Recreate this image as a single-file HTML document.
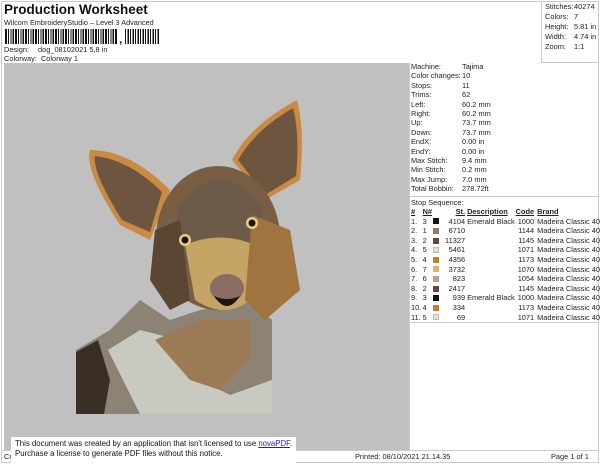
<!DOCTYPE html>
<html><head><style>
*{margin:0;padding:0;box-sizing:border-box}
body{width:600px;height:464px;background:#fff;font-family:"Liberation Sans",sans-serif;font-size:7.4px;color:#222;position:relative;overflow:hidden}
.a{position:absolute;white-space:nowrap}
.bx{position:absolute;border:1px solid #ccc}
td{padding:0}
</style></head><body>
<div class="bx" style="left:1px;top:1px;width:598px;height:462px"></div>
<div class="bx" style="left:541px;top:1px;width:58px;height:62px"></div>
<div class="a" style="left:4px;top:2px;font-size:13.5px;font-weight:bold;color:#111">Production Worksheet</div>
<div class="a" style="left:4px;top:18px;font-size:7.3px">Wilcom EmbroideryStudio – Level 3 Advanced</div>
<div class="a" style="left:5px;top:29px;width:113px;height:15px;background:repeating-linear-gradient(90deg,#111 0 2px,#fff 2px 3px,#111 3px 4px,#fff 4px 5.5px,#111 5.5px 6.5px,#fff 6.5px 7.5px,#111 7.5px 9px,#fff 9px 10px)"></div>
<div class="a" style="left:119px;top:33px;font-size:12px;font-weight:bold;line-height:12px">,</div>
<div class="a" style="left:125px;top:29px;width:35px;height:15px;background:repeating-linear-gradient(90deg,#111 0 1px,#fff 1px 2.5px,#111 2.5px 4px,#fff 4px 5px)"></div>
<div class="a" style="left:4px;top:45px">Design:</div><div class="a" style="left:38px;top:45px">dog_08102021 5,8 in</div>
<div class="a" style="left:4px;top:54px">Colorway:&nbsp; Colorway 1</div>
<div class="a" style="left:545px;top:2px;line-height:10px">Stitches:<br>Colors:<br>Height:<br>Width:<br>Zoom:</div>
<div class="a" style="left:574px;top:2px;line-height:10px">40274<br>7<br>5.81 in<br>4.74 in<br>1:1</div>
<div class="a" style="left:4px;top:63px;width:405px;height:387px;background:#c0c0c0"></div>
<svg class="a" style="left:4px;top:63px" width="405" height="387" viewBox="4 63 405 387">
<path d="M76 414 L76 350 L110 330 L140 300 L170 320 L200 310 L250 300 L272 320 L272 414 Z" fill="#8d8375"/>
<path d="M76 414 L76 352 L98 340 L110 380 L104 414Z" fill="#3a2f25"/>
<path d="M108 350 L140 330 L180 340 L200 380 L230 395 L272 380 L272 414 L140 414 Z" fill="#c9cabf"/>
<path d="M155 340 L200 320 L250 320 L250 360 L220 390 L190 380 Z" fill="#9c7a55"/>
<path d="M90 150 Q84 170 120 225 L150 240 L170 190 Q130 150 90 150Z" fill="#c98a42"/>
<path d="M95 156 Q92 172 122 220 L150 232 L162 192 Q130 160 95 156Z" fill="#6e5540"/>
<path d="M297 100 Q250 125 232 160 L265 200 L300 180 Q305 130 297 100Z" fill="#c98a42"/>
<path d="M293 108 Q255 130 238 160 L265 195 L296 176 Q300 135 293 108Z" fill="#6e5540"/>
<ellipse cx="218" cy="238" rx="62" ry="72" fill="#7a5e44"/>
<ellipse cx="220" cy="230" rx="45" ry="50" fill="#6d5b4a"/>
<path d="M185 245 Q220 230 255 245 L250 300 Q225 320 195 300Z" fill="#c6a466"/>
<path d="M252 215 L290 230 L300 290 L265 320 L245 300Z" fill="#a0743f"/>
<path d="M155 230 L180 220 L190 300 L170 310 L150 280Z" fill="#5a4632"/>
<ellipse cx="185" cy="240" rx="6" ry="6" fill="#e8d080"/><circle cx="185" cy="240" r="3.5" fill="#1b1510"/>
<ellipse cx="252" cy="223" rx="6" ry="6" fill="#e8d080"/><circle cx="252" cy="223" r="3.5" fill="#1b1510"/>
<ellipse cx="227" cy="288" rx="17" ry="14" fill="#8a6d62"/>
<path d="M214 296 Q227 316 240 296 Q227 302 214 296Z" fill="#1b1510"/>
</svg>
<div class="a" style="left:409px;top:63px;width:1px;height:387px;background:#ccc"></div>
<div class="a" style="left:411px;top:62px;line-height:9.4px">Machine:<br>Color changes:<br>Stops:<br>Trims:<br>Left:<br>Right:<br>Up:<br>Down:<br>EndX:<br>EndY:<br>Max Stitch:<br>Min Stitch:<br>Max Jump:<br>Total Bobbin:</div>
<div class="a" style="left:462px;top:62px;line-height:9.4px">Tajima<br>10<br>11<br>62<br>60.2 mm<br>60.2 mm<br>73.7 mm<br>73.7 mm<br>0.00 in<br>0.00 in<br>9.4 mm<br>0.2 mm<br>7.0 mm<br>278.72ft</div>
<div class="a" style="left:410px;top:196px;width:189px;height:1px;background:#ccc"></div>
<div class="a" style="left:411px;top:198px">Stop Sequence:</div>
<div class="a" style="left:411px;top:207px">
<table style="border-collapse:collapse;font-size:7.4px;line-height:9.6px">
<tr style="font-weight:bold;text-decoration:underline"><td style="width:13px">#</td><td style="width:12px">N#</td><td style="width:9px"></td><td style="width:29px;text-align:right">St.</td><td style="width:50px;padding-left:2px">Description</td><td style="width:20px;text-align:right">Code</td><td style="padding-left:3px">Brand</td></tr>
<tr><td>1.</td><td>3</td><td><div style="width:6px;height:6px;background:#111"></div></td><td style="text-align:right">4104</td><td style="padding-left:2px">Emerald Black</td><td style="text-align:right">1000</td><td style="padding-left:3px">Madeira Classic 40</td></tr>
<tr><td>2.</td><td>1</td><td><div style="width:6px;height:6px;background:#9a7a62"></div></td><td style="text-align:right">6710</td><td></td><td style="text-align:right">1144</td><td style="padding-left:3px">Madeira Classic 40</td></tr>
<tr><td>3.</td><td>2</td><td><div style="width:6px;height:6px;background:#6a4535"></div></td><td style="text-align:right">11327</td><td></td><td style="text-align:right">1145</td><td style="padding-left:3px">Madeira Classic 40</td></tr>
<tr><td>4.</td><td>5</td><td><div style="width:6px;height:6px;background:#e4e0d6;border:1px solid #bbb"></div></td><td style="text-align:right">5461</td><td></td><td style="text-align:right">1071</td><td style="padding-left:3px">Madeira Classic 40</td></tr>
<tr><td>5.</td><td>4</td><td><div style="width:6px;height:6px;background:#c77a30"></div></td><td style="text-align:right">4356</td><td></td><td style="text-align:right">1173</td><td style="padding-left:3px">Madeira Classic 40</td></tr>
<tr><td>6.</td><td>7</td><td><div style="width:6px;height:6px;background:#deb070"></div></td><td style="text-align:right">3732</td><td></td><td style="text-align:right">1070</td><td style="padding-left:3px">Madeira Classic 40</td></tr>
<tr><td>7.</td><td>6</td><td><div style="width:6px;height:6px;background:#c49a8c"></div></td><td style="text-align:right">823</td><td></td><td style="text-align:right">1054</td><td style="padding-left:3px">Madeira Classic 40</td></tr>
<tr><td>8.</td><td>2</td><td><div style="width:6px;height:6px;background:#6a4535"></div></td><td style="text-align:right">2417</td><td></td><td style="text-align:right">1145</td><td style="padding-left:3px">Madeira Classic 40</td></tr>
<tr><td>9.</td><td>3</td><td><div style="width:6px;height:6px;background:#111"></div></td><td style="text-align:right">939</td><td style="padding-left:2px">Emerald Black</td><td style="text-align:right">1000</td><td style="padding-left:3px">Madeira Classic 40</td></tr>
<tr><td>10.</td><td>4</td><td><div style="width:6px;height:6px;background:#c77a30"></div></td><td style="text-align:right">334</td><td></td><td style="text-align:right">1173</td><td style="padding-left:3px">Madeira Classic 40</td></tr>
<tr><td>11.</td><td>5</td><td><div style="width:6px;height:6px;background:#e4e0d6;border:1px solid #bbb"></div></td><td style="text-align:right">69</td><td></td><td style="text-align:right">1071</td><td style="padding-left:3px">Madeira Classic 40</td></tr>
</table></div>
<div class="a" style="left:410px;top:322px;width:189px;height:1px;background:#ccc"></div>
<div class="a" style="left:1px;top:450px;width:598px;height:1px;background:#ccc"></div>
<div class="a" style="left:4px;top:452px">Cr</div>
<div class="a" style="left:355px;top:452px">Printed: 08/10/2021 21.14.35</div>
<div class="a" style="left:551px;top:452px">Page 1 of 1</div>
<div class="a" style="left:11px;top:437px;width:285px;height:27px;background:#fff;padding:2px 0 0 4px;font-size:7.8px;line-height:10px;color:#111">This document was created by an application that isn't licensed to use <span style="color:#1a1aee;text-decoration:underline">novaPDF</span>.<br>Purchase a license to generate PDF files without this notice.</div>
</body></html>
